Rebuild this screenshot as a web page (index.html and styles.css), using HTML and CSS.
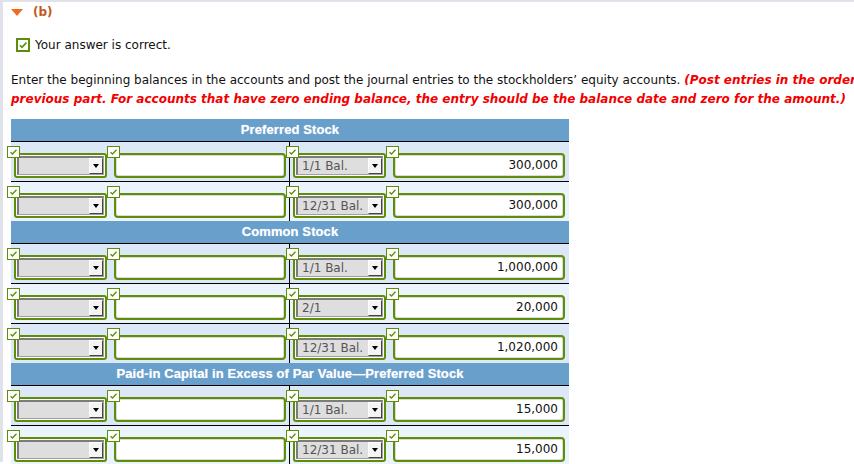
FILE: index.html
```html
<!DOCTYPE html>
<html>
<head>
<meta charset="utf-8">
<link rel="stylesheet" href="styles.css">
</head>
<body>
<div class="page">
  <div class="part-title"><span class="tri"></span><span class="part-label">(b)</span></div>
  <div class="result">
    <span class="bigck"><svg width="10" height="10" viewBox="0 0 10 10"><path d="M1.8 5.2 L4 7.4 L8.4 2.6" fill="none" stroke="#5e8d08" stroke-width="1.6"/></svg></span>
    <span>Your answer is correct.</span>
  </div>
  <p class="instr">Enter the beginning balances in the accounts and post the journal entries to the stockholders’ equity accounts. <em>(Post entries in the order presented in the<br>previous part. For accounts that have zero ending balance, the entry should be the balance date and zero for the amount.)</em></p>

  <div class="ledger">
    <div class="sect-head">Preferred Stock</div>
    <div class="row dark">
      <div class="cell">
        <div class="sel"><span class="ck"><svg width="9" height="8" viewBox="0 0 9 8"><path d="M1.5 4.2 L3.5 6 L7.5 1.8" fill="none" stroke="#5e8d08" stroke-width="1.3"/></svg></span><div class="sel-in"><span class="sv"></span><span class="arr"><i></i></span></div></div>
        <div class="inp"><span class="ck"><svg width="9" height="8" viewBox="0 0 9 8"><path d="M1.5 4.2 L3.5 6 L7.5 1.8" fill="none" stroke="#5e8d08" stroke-width="1.3"/></svg></span></div>
      </div>
      <div class="cell">
        <div class="sel"><span class="ck"><svg width="9" height="8" viewBox="0 0 9 8"><path d="M1.5 4.2 L3.5 6 L7.5 1.8" fill="none" stroke="#5e8d08" stroke-width="1.3"/></svg></span><div class="sel-in"><span class="sv">1/1 Bal.</span><span class="arr"><i></i></span></div></div>
        <div class="inp"><span class="ck"><svg width="9" height="8" viewBox="0 0 9 8"><path d="M1.5 4.2 L3.5 6 L7.5 1.8" fill="none" stroke="#5e8d08" stroke-width="1.3"/></svg></span>300,000</div>
      </div>
    </div>
    <div class="row light last">
      <div class="cell">
        <div class="sel"><span class="ck"><svg width="9" height="8" viewBox="0 0 9 8"><path d="M1.5 4.2 L3.5 6 L7.5 1.8" fill="none" stroke="#5e8d08" stroke-width="1.3"/></svg></span><div class="sel-in"><span class="sv"></span><span class="arr"><i></i></span></div></div>
        <div class="inp"><span class="ck"><svg width="9" height="8" viewBox="0 0 9 8"><path d="M1.5 4.2 L3.5 6 L7.5 1.8" fill="none" stroke="#5e8d08" stroke-width="1.3"/></svg></span></div>
      </div>
      <div class="cell">
        <div class="sel"><span class="ck"><svg width="9" height="8" viewBox="0 0 9 8"><path d="M1.5 4.2 L3.5 6 L7.5 1.8" fill="none" stroke="#5e8d08" stroke-width="1.3"/></svg></span><div class="sel-in"><span class="sv">12/31 Bal.</span><span class="arr"><i></i></span></div></div>
        <div class="inp"><span class="ck"><svg width="9" height="8" viewBox="0 0 9 8"><path d="M1.5 4.2 L3.5 6 L7.5 1.8" fill="none" stroke="#5e8d08" stroke-width="1.3"/></svg></span>300,000</div>
      </div>
    </div>

    <div class="sect-head">Common Stock</div>
    <div class="row dark">
      <div class="cell">
        <div class="sel"><span class="ck"><svg width="9" height="8" viewBox="0 0 9 8"><path d="M1.5 4.2 L3.5 6 L7.5 1.8" fill="none" stroke="#5e8d08" stroke-width="1.3"/></svg></span><div class="sel-in"><span class="sv"></span><span class="arr"><i></i></span></div></div>
        <div class="inp"><span class="ck"><svg width="9" height="8" viewBox="0 0 9 8"><path d="M1.5 4.2 L3.5 6 L7.5 1.8" fill="none" stroke="#5e8d08" stroke-width="1.3"/></svg></span></div>
      </div>
      <div class="cell">
        <div class="sel"><span class="ck"><svg width="9" height="8" viewBox="0 0 9 8"><path d="M1.5 4.2 L3.5 6 L7.5 1.8" fill="none" stroke="#5e8d08" stroke-width="1.3"/></svg></span><div class="sel-in"><span class="sv">1/1 Bal.</span><span class="arr"><i></i></span></div></div>
        <div class="inp"><span class="ck"><svg width="9" height="8" viewBox="0 0 9 8"><path d="M1.5 4.2 L3.5 6 L7.5 1.8" fill="none" stroke="#5e8d08" stroke-width="1.3"/></svg></span>1,000,000</div>
      </div>
    </div>
    <div class="row light">
      <div class="cell">
        <div class="sel"><span class="ck"><svg width="9" height="8" viewBox="0 0 9 8"><path d="M1.5 4.2 L3.5 6 L7.5 1.8" fill="none" stroke="#5e8d08" stroke-width="1.3"/></svg></span><div class="sel-in"><span class="sv"></span><span class="arr"><i></i></span></div></div>
        <div class="inp"><span class="ck"><svg width="9" height="8" viewBox="0 0 9 8"><path d="M1.5 4.2 L3.5 6 L7.5 1.8" fill="none" stroke="#5e8d08" stroke-width="1.3"/></svg></span></div>
      </div>
      <div class="cell">
        <div class="sel"><span class="ck"><svg width="9" height="8" viewBox="0 0 9 8"><path d="M1.5 4.2 L3.5 6 L7.5 1.8" fill="none" stroke="#5e8d08" stroke-width="1.3"/></svg></span><div class="sel-in"><span class="sv">2/1</span><span class="arr"><i></i></span></div></div>
        <div class="inp"><span class="ck"><svg width="9" height="8" viewBox="0 0 9 8"><path d="M1.5 4.2 L3.5 6 L7.5 1.8" fill="none" stroke="#5e8d08" stroke-width="1.3"/></svg></span>20,000</div>
      </div>
    </div>
    <div class="row dark last">
      <div class="cell">
        <div class="sel"><span class="ck"><svg width="9" height="8" viewBox="0 0 9 8"><path d="M1.5 4.2 L3.5 6 L7.5 1.8" fill="none" stroke="#5e8d08" stroke-width="1.3"/></svg></span><div class="sel-in"><span class="sv"></span><span class="arr"><i></i></span></div></div>
        <div class="inp"><span class="ck"><svg width="9" height="8" viewBox="0 0 9 8"><path d="M1.5 4.2 L3.5 6 L7.5 1.8" fill="none" stroke="#5e8d08" stroke-width="1.3"/></svg></span></div>
      </div>
      <div class="cell">
        <div class="sel"><span class="ck"><svg width="9" height="8" viewBox="0 0 9 8"><path d="M1.5 4.2 L3.5 6 L7.5 1.8" fill="none" stroke="#5e8d08" stroke-width="1.3"/></svg></span><div class="sel-in"><span class="sv">12/31 Bal.</span><span class="arr"><i></i></span></div></div>
        <div class="inp"><span class="ck"><svg width="9" height="8" viewBox="0 0 9 8"><path d="M1.5 4.2 L3.5 6 L7.5 1.8" fill="none" stroke="#5e8d08" stroke-width="1.3"/></svg></span>1,020,000</div>
      </div>
    </div>

    <div class="sect-head">Paid-in Capital in Excess of Par Value—Preferred Stock</div>
    <div class="row dark">
      <div class="cell">
        <div class="sel"><span class="ck"><svg width="9" height="8" viewBox="0 0 9 8"><path d="M1.5 4.2 L3.5 6 L7.5 1.8" fill="none" stroke="#5e8d08" stroke-width="1.3"/></svg></span><div class="sel-in"><span class="sv"></span><span class="arr"><i></i></span></div></div>
        <div class="inp"><span class="ck"><svg width="9" height="8" viewBox="0 0 9 8"><path d="M1.5 4.2 L3.5 6 L7.5 1.8" fill="none" stroke="#5e8d08" stroke-width="1.3"/></svg></span></div>
      </div>
      <div class="cell">
        <div class="sel"><span class="ck"><svg width="9" height="8" viewBox="0 0 9 8"><path d="M1.5 4.2 L3.5 6 L7.5 1.8" fill="none" stroke="#5e8d08" stroke-width="1.3"/></svg></span><div class="sel-in"><span class="sv">1/1 Bal.</span><span class="arr"><i></i></span></div></div>
        <div class="inp"><span class="ck"><svg width="9" height="8" viewBox="0 0 9 8"><path d="M1.5 4.2 L3.5 6 L7.5 1.8" fill="none" stroke="#5e8d08" stroke-width="1.3"/></svg></span>15,000</div>
      </div>
    </div>
    <div class="row light">
      <div class="cell">
        <div class="sel"><span class="ck"><svg width="9" height="8" viewBox="0 0 9 8"><path d="M1.5 4.2 L3.5 6 L7.5 1.8" fill="none" stroke="#5e8d08" stroke-width="1.3"/></svg></span><div class="sel-in"><span class="sv"></span><span class="arr"><i></i></span></div></div>
        <div class="inp"><span class="ck"><svg width="9" height="8" viewBox="0 0 9 8"><path d="M1.5 4.2 L3.5 6 L7.5 1.8" fill="none" stroke="#5e8d08" stroke-width="1.3"/></svg></span></div>
      </div>
      <div class="cell">
        <div class="sel"><span class="ck"><svg width="9" height="8" viewBox="0 0 9 8"><path d="M1.5 4.2 L3.5 6 L7.5 1.8" fill="none" stroke="#5e8d08" stroke-width="1.3"/></svg></span><div class="sel-in"><span class="sv">12/31 Bal.</span><span class="arr"><i></i></span></div></div>
        <div class="inp"><span class="ck"><svg width="9" height="8" viewBox="0 0 9 8"><path d="M1.5 4.2 L3.5 6 L7.5 1.8" fill="none" stroke="#5e8d08" stroke-width="1.3"/></svg></span>15,000</div>
      </div>
    </div>
  </div>
</div>
</body>
</html>
```
FILE: styles.css
```css
html, body {
  margin: 0;
  padding: 0;
  background: #fff;
  overflow: hidden;
}
body {
  width: 854px;
  height: 464px;
  font-family: "DejaVu Sans", Verdana, sans-serif;
  font-size: 12px;
  color: #111;
}
.page {
  border-top: 2px solid #dfe3e9;
  border-left: 3px solid #dfe3e9;
  padding-left: 8px;
  height: 462px;
  box-sizing: border-box;
}
.part-title {
  display: flex;
  align-items: center;
  height: 18px;
  margin-top: 1px;
}
.tri {
  width: 0;
  height: 0;
  border-left: 6px solid transparent;
  border-right: 6px solid transparent;
  border-top: 7px solid #f26c1f;
  margin-right: 10px;
}
.part-label {
  font-weight: bold;
  color: #c4571d;
}
.result {
  display: flex;
  align-items: center;
  margin-top: 16px;
  margin-left: 5px;
  height: 16px;
}
.bigck {
  width: 14px;
  height: 14px;
  box-sizing: border-box;
  border: 2px solid #5e8d08;
  background: #fff;
  display: flex;
  align-items: center;
  justify-content: center;
  margin-right: 5px;
}
.instr {
  margin: 18px 0 0 0;
  line-height: 19px;
  white-space: nowrap;
}
.instr em {
  color: #f20000;
  font-weight: bold;
}
.ledger {
  width: 558px;
  margin-top: 10px;
}
.sect-head {
  height: 22px;
  background: #689fcb;
  border-bottom: 1px solid #000;
  color: #fff;
  font-family: "Liberation Sans", Arial, sans-serif;
  font-weight: bold;
  font-size: 13px;
  letter-spacing: 0.1px;
  text-align: center;
  line-height: 22px;
  text-shadow: 0 0 1px #bcd3ea;
}
.row {
  display: flex;
  height: 40px;
  box-sizing: border-box;
  border-bottom: 1px solid #000;
}
.row.last {
  height: 39px;
  border-bottom: none;
}
.row.dark { background: #dce8f8; }
.row.light { background: #ebf3fd; }
.cell {
  display: flex;
  gap: 7px;
  padding: 11px 0 0 3px;
  box-sizing: border-box;
  width: 278px;
}
.cell + .cell {
  border-left: 1px solid #000;
  width: 280px;
}
.sel, .inp {
  position: relative;
  height: 25px;
  box-sizing: border-box;
  border: 2px solid #5e8d08;
  background: #fff;
}
.sel {
  width: 93px;
  border-radius: 3px;
  padding: 1px;
}
.sel-in {
  height: 100%;
  box-sizing: border-box;
  border-style: solid;
  border-width: 2px 1px 1px 2px;
  border-color: #7c7c7c #a0a0a0 #a0a0a0 #7c7c7c;
  background: #dedede;
  display: flex;
  align-items: center;
}
.sv {
  flex: 1;
  padding-left: 4px;
  color: #555;
  white-space: nowrap;
  overflow: hidden;
}
.arr {
  width: 14px;
  height: 100%;
  box-sizing: border-box;
  background: #f4f4f4;
  border-right: 1px solid #444;
  border-bottom: 1px solid #444;
  border-left: 1px solid #fff;
  border-top: 1px solid #fff;
  display: flex;
  align-items: center;
  justify-content: center;
}
.arr i {
  width: 0;
  height: 0;
  border-left: 3px solid transparent;
  border-right: 3px solid transparent;
  border-top: 4px solid #000;
}
.inp {
  width: 172px;
  border-radius: 4px;
  box-shadow: inset 0 0 0 1px #dcdcdc;
  text-align: right;
  padding-right: 5px;
  line-height: 21px;
  color: #111;
}
.ck {
  position: absolute;
  left: -9px;
  top: -9px;
  width: 13px;
  height: 12px;
  box-sizing: border-box;
  border: 1px solid #5e8d08;
  background: #fff;
  display: flex;
  align-items: center;
  justify-content: center;
  z-index: 2;
}
```
